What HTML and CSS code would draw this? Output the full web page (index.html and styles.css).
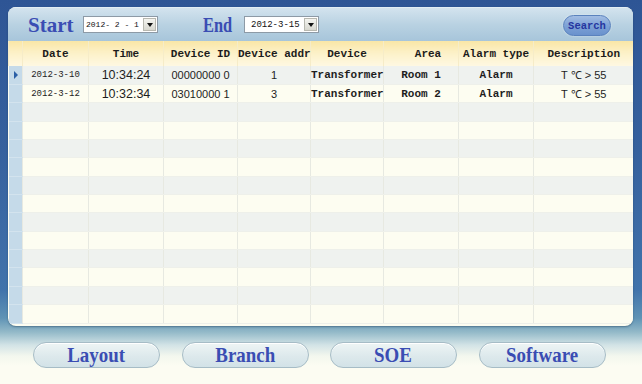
FILE: index.html
```html
<!DOCTYPE html>
<html>
<head>
    <meta charset="utf-8" />
    <title>Alarm records</title>
    <link rel="stylesheet" href="styles.css">
</head>
<body>
    <div class="panel">
        <div class="toolbar">
            <div class="label"><span class="big">Start</span></div>
            <div class="datebox datebox-start">
                <span>2012- 2 - 1</span>
                <span class="arrow"></span>
            </div>
            <div class="label label-end"><span class="big">End</span></div>
            <div class="datebox datebox-end">
                <span>2012-3-15</span>
                <span class="arrow"></span>
            </div>
            <div class="search">Search</div>
        </div>

        <table class="grid">
            <colgroup>
                <col style="width:14px">
                <col style="width:66px">
                <col style="width:75px">
                <col style="width:74px">
                <col style="width:73px">
                <col style="width:73px">
                <col style="width:75px">
                <col style="width:75px">
                <col style="width:100px">
            </colgroup>
            <thead>
                <tr>
                    <th></th>
                    <th>Date</th>
                    <th>Time</th>
                    <th>Device ID</th>
                    <th>Device addr</th>
                    <th>Device</th>
                    <th class="area">Area</th>
                    <th>Alarm type</th>
                    <th>Description</th>
                </tr>
            </thead>
            <tbody>
                <tr>
                    <td class="ind"><span class="pointer"></span></td>
                    <td class="date">2012-3-10</td>
                    <td class="time">10:34:24</td>
                    <td class="num">00000000 0</td>
                    <td class="num">1</td>
                    <td class="bold">Transformer</td>
                    <td class="bold">Room 1</td>
                    <td class="bold">Alarm</td>
                    <td class="desc">T ℃ &gt; 55</td>
                </tr>
                <tr>
                    <td class="ind"></td>
                    <td class="date">2012-3-12</td>
                    <td class="time">10:32:34</td>
                    <td class="num">03010000 1</td>
                    <td class="num">3</td>
                    <td class="bold">Transformer</td>
                    <td class="bold">Room 2</td>
                    <td class="bold">Alarm</td>
                    <td class="desc">T ℃ &gt; 55</td>
                </tr>
                <tr><td class="ind"></td><td></td><td></td><td></td><td></td><td></td><td></td><td></td><td></td></tr>
                <tr><td class="ind"></td><td></td><td></td><td></td><td></td><td></td><td></td><td></td><td></td></tr>
                <tr><td class="ind"></td><td></td><td></td><td></td><td></td><td></td><td></td><td></td><td></td></tr>
                <tr><td class="ind"></td><td></td><td></td><td></td><td></td><td></td><td></td><td></td><td></td></tr>
                <tr><td class="ind"></td><td></td><td></td><td></td><td></td><td></td><td></td><td></td><td></td></tr>
                <tr><td class="ind"></td><td></td><td></td><td></td><td></td><td></td><td></td><td></td><td></td></tr>
                <tr><td class="ind"></td><td></td><td></td><td></td><td></td><td></td><td></td><td></td><td></td></tr>
                <tr><td class="ind"></td><td></td><td></td><td></td><td></td><td></td><td></td><td></td><td></td></tr>
                <tr><td class="ind"></td><td></td><td></td><td></td><td></td><td></td><td></td><td></td><td></td></tr>
                <tr><td class="ind"></td><td></td><td></td><td></td><td></td><td></td><td></td><td></td><td></td></tr>
                <tr><td class="ind"></td><td></td><td></td><td></td><td></td><td></td><td></td><td></td><td></td></tr>
                <tr><td class="ind"></td><td></td><td></td><td></td><td></td><td></td><td></td><td></td><td></td></tr>
            </tbody>
        </table>
    </div>

    <div class="nav">
        <div class="navbtn"><span class="big">Layout</span></div>
        <div class="navbtn"><span class="big">Branch</span></div>
        <div class="navbtn"><span class="big">SOE</span></div>
        <div class="navbtn"><span class="big">Software</span></div>
    </div>
</body>
</html>
```

FILE: styles.css
```css
body {
    margin: 0;
    width: 642px;
    height: 384px;
    overflow: hidden;
    font-family: "Liberation Mono", monospace;
    background-image: linear-gradient(to bottom, #2e5595 0px, #36619e 150px, #4173ab 290px, #5f93b5 318px, #93b9c8 332px, #d2e3e6 345px, #f3f7ee 356px, #fcfcf2 366px);
}

.panel {
    box-sizing: border-box;
    width: 625px;
    height: 319px;
    margin: 7px 0 0 8px;
    border-radius: 8px;
    overflow: hidden;
    background: #fdfdf1;
    box-shadow: 0 1px 2px rgba(20, 50, 80, .45);
}

.toolbar {
    display: flex;
    align-items: center;
    height: 34px;
    padding-left: 20px;
    background-image: linear-gradient(to bottom, #d3e3ee, #b9d2e2 50%, #a7c5da);
    border-top: 1px solid #e2edf4;
    box-sizing: border-box;
}

.big {
    display: inline-block;
    font: bold 21px "Liberation Serif", serif;
    color: #3a4db3;
}

.label {
    width: 55px;
    height: 24px;
    line-height: 24px;
    white-space: nowrap;
}

.label .big {
    transform-origin: left center;
}

.label-end {
    width: 41px;
    margin-left: 45px;
}

.label-end .big {
    transform: scaleX(.78);
}

.datebox {
    box-sizing: border-box;
    display: flex;
    align-items: center;
    justify-content: space-between;
    width: 75px;
    height: 17px;
    padding: 0 1px 0 2px;
    background: #fff;
    border: 1px solid #8d9aa6;
    font: 9px "Liberation Mono", monospace;
    color: #111;
    white-space: nowrap;
}

.datebox-start {
    font-size: 8px;
}

.datebox-end {
    padding-left: 6px;
}

.arrow {
    position: relative;
    flex: none;
    width: 13px;
    height: 13px;
    background: linear-gradient(to bottom, #f4f4f0, #d8d8d0);
    border: 1px solid #b8b8b0;
    box-sizing: border-box;
}

.arrow::after {
    content: "";
    position: absolute;
    left: 3px;
    top: 4px;
    border-left: 3px solid transparent;
    border-right: 3px solid transparent;
    border-top: 4px solid #111;
}

.search {
    display: flex;
    align-items: center;
    justify-content: center;
    margin-left: auto;
    margin-right: 22px;
    margin-top: 2px;
    width: 48px;
    height: 21px;
    box-sizing: border-box;
    border-radius: 11px;
    border: 1px solid #5a82bd;
    background-image: linear-gradient(to bottom, #a2bde3, #7ea2d6 50%, #6a92cd);
    font: bold 10.5px "Liberation Mono", monospace;
    color: #2536a0;
    box-shadow: 0 0 2px rgba(255, 255, 255, .6);
}

.grid {
    width: 625px;
    table-layout: fixed;
    border-collapse: collapse;
}

.grid th {
    height: 25px;
    padding: 0;
    background-image: linear-gradient(to bottom, #f9e6a6, #fcf1c9 50%, #fef8e2);
    border-left: 1px solid #f6ecc8;
    font: bold 11px "Liberation Mono", monospace;
    color: #1c1c1c;
    white-space: nowrap;
}

.grid th.area {
    padding-left: 14px;
}

.grid td {
    height: 18.36px;
    padding: 0;
    border-left: 1px solid #e7e9e1;
    border-bottom: 1px solid #eef0ea;
    text-align: center;
    color: #1e1e1e;
    white-space: nowrap;
    overflow: visible;
    box-sizing: border-box;
}

.grid tbody tr:nth-child(odd) td {
    background: #eff2ef;
}

.grid tbody tr:nth-child(even) td {
    background: #fdfdf1;
}

.grid tbody tr td.ind {
    position: relative;
    background: #c5dae9;
    border-left: none;
    border-bottom: 1px solid #d3e3ee;
}

.pointer {
    position: absolute;
    left: 5px;
    top: 5px;
    border-top: 4px solid transparent;
    border-bottom: 4px solid transparent;
    border-left: 4px solid #2b5fa6;
}

.date {
    font: 9px "Liberation Mono", monospace;
}

.time {
    font: 12.5px "Liberation Sans", sans-serif;
    color: #2a2a2a;
}

.num {
    font: 11px "Liberation Sans", sans-serif;
}

.bold {
    font: bold 11px "Liberation Mono", monospace;
}

.desc {
    font: 11px "Liberation Sans", sans-serif;
}

.nav {
    display: flex;
    gap: 21.5px;
    padding-left: 33px;
    margin-top: 16px;
}

.navbtn {
    box-sizing: border-box;
    width: 127px;
    height: 26px;
    line-height: 25px;
    text-align: center;
    border-radius: 13px;
    border: 1px solid #a6bcc6;
    background-image: linear-gradient(to bottom, #eef5f5, #dde9ec 55%, #d2e2e7);
    box-shadow: inset 0 1px 0 #fff;
    white-space: nowrap;
}

.navbtn .big {
    transform: scaleX(.9);
}
```
